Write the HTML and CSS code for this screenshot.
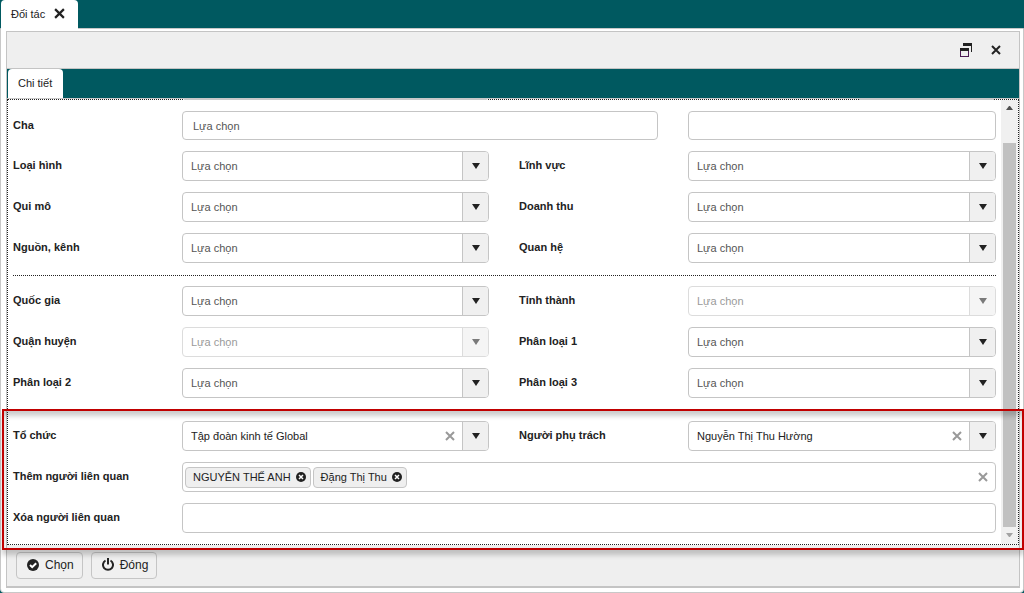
FILE: index.html
```html
<!DOCTYPE html>
<html lang="vi">
<head>
<meta charset="utf-8">
<title>Đối tác</title>
<link rel="stylesheet" href="styles.css">
</head>
<body>
<svg class="defs" aria-hidden="true">
  <symbol id="cross" viewBox="0 0 10 10"><path d="M1 1L9 9M9 1L1 9" fill="none" stroke="currentColor" stroke-width="2"/></symbol>
  <symbol id="down" viewBox="0 0 8 6"><path d="M0 0H8L4 6Z" fill="currentColor"/></symbol>
  <symbol id="remove" viewBox="0 0 10 10"><circle cx="5" cy="5" r="5" fill="currentColor"/><path d="M3 3L7 7M7 3L3 7" stroke="#fff" stroke-width="1.5"/></symbol>
</svg>
<nav class="bar">
  <div class="tab tab-main"><span>Đối tác</span><button class="icon" type="button" aria-label="Đóng tab"><svg width="11" height="11"><use href="#cross"/></svg></button></div>
</nav>
<main class="page">
  <section class="window">
    <header class="titlebar">
      <button class="icon" type="button" aria-label="Khôi phục"><svg width="12" height="14" viewBox="0 0 12 14"><path d="M3 0H12V9H11V3H3Z" fill="#222"/><path d="M0 5H9V14H0ZM1 8V13H8V8Z" fill="#222" fill-rule="evenodd"/><path d="M.5 8V13.5H8.5V8" fill="none" stroke="#4b1a55"/></svg></button>
      <button class="icon" type="button" aria-label="Đóng cửa sổ"><svg width="10" height="10"><use href="#cross"/></svg></button>
    </header>
    <nav class="bar strip"><a class="tab" href="#detail">Chi tiết</a></nav>
    <div class="content" id="detail">
      <form class="form" id="partner">
        <div class="grid edge"><i></i><i></i></div>
        <div class="grid">
          <label for="cha">Cha</label>
          <input class="box parent" id="cha" type="text" placeholder="Lựa chọn">
          <input class="box code" type="text" aria-label="Mã cha">
        </div>
        <div class="grid">
          <label for="loai">Loại hình</label>
          <div class="box combo"><select id="loai"><option>Lựa chọn</option></select><span class="arrow"><svg width="8" height="6"><use href="#down"/></svg></span></div>
          <label class="second" for="linh">Lĩnh vực</label>
          <div class="box combo"><select id="linh"><option>Lựa chọn</option></select><span class="arrow"><svg width="8" height="6"><use href="#down"/></svg></span></div>
          <label for="qui">Qui mô</label>
          <div class="box combo"><select id="qui"><option>Lựa chọn</option></select><span class="arrow"><svg width="8" height="6"><use href="#down"/></svg></span></div>
          <label class="second" for="doanh">Doanh thu</label>
          <div class="box combo"><select id="doanh"><option>Lựa chọn</option></select><span class="arrow"><svg width="8" height="6"><use href="#down"/></svg></span></div>
          <label for="nguon">Nguồn, kênh</label>
          <div class="box combo"><select id="nguon"><option>Lựa chọn</option></select><span class="arrow"><svg width="8" height="6"><use href="#down"/></svg></span></div>
          <label class="second" for="quanhe">Quan hệ</label>
          <div class="box combo"><select id="quanhe"><option>Lựa chọn</option></select><span class="arrow"><svg width="8" height="6"><use href="#down"/></svg></span></div>
        </div>
        <hr>
        <div class="grid">
          <label for="quoc">Quốc gia</label>
          <div class="box combo"><select id="quoc"><option>Lựa chọn</option></select><span class="arrow"><svg width="8" height="6"><use href="#down"/></svg></span></div>
          <label class="second" for="tinh">Tỉnh thành</label>
          <div class="box combo off"><select id="tinh" disabled><option>Lựa chọn</option></select><span class="arrow"><svg width="8" height="6"><use href="#down"/></svg></span></div>
          <label for="quan">Quận huyện</label>
          <div class="box combo off"><select id="quan" disabled><option>Lựa chọn</option></select><span class="arrow"><svg width="8" height="6"><use href="#down"/></svg></span></div>
          <label class="second" for="pl1">Phân loại 1</label>
          <div class="box combo"><select id="pl1"><option>Lựa chọn</option></select><span class="arrow"><svg width="8" height="6"><use href="#down"/></svg></span></div>
          <label for="pl2">Phân loại 2</label>
          <div class="box combo"><select id="pl2"><option>Lựa chọn</option></select><span class="arrow"><svg width="8" height="6"><use href="#down"/></svg></span></div>
          <label class="second" for="pl3">Phân loại 3</label>
          <div class="box combo"><select id="pl3"><option>Lựa chọn</option></select><span class="arrow"><svg width="8" height="6"><use href="#down"/></svg></span></div>
        </div>
        <hr>
        <div class="grid marked">
          <label for="tochuc">Tổ chức</label>
          <div class="box combo filled"><select id="tochuc"><option>Tập đoàn kinh tế Global</option></select><button class="icon clear" type="button" aria-label="Xóa tổ chức"><svg width="10" height="10"><use href="#cross"/></svg></button><span class="arrow"><svg width="8" height="6"><use href="#down"/></svg></span></div>
          <label class="second" for="phutrach">Người phụ trách</label>
          <div class="box combo filled"><select id="phutrach"><option>Nguyễn Thị Thu Hường</option></select><button class="icon clear" type="button" aria-label="Xóa người phụ trách"><svg width="10" height="10"><use href="#cross"/></svg></button><span class="arrow"><svg width="8" height="6"><use href="#down"/></svg></span></div>
          <label for="them">Thêm người liên quan</label>
          <div class="box tags">
            <span class="tag">NGUYỄN THẾ ANH<button class="icon" type="button" aria-label="Bỏ NGUYỄN THẾ ANH"><svg width="10" height="10"><use href="#remove"/></svg></button></span>
            <span class="tag">Đặng Thị Thu<button class="icon" type="button" aria-label="Bỏ Đặng Thị Thu"><svg width="10" height="10"><use href="#remove"/></svg></button></span>
            <input id="them" type="text">
            <button class="icon clear" type="button" aria-label="Xóa tất cả"><svg width="10" height="10"><use href="#cross"/></svg></button>
          </div>
          <label for="xoa">Xóa người liên quan</label>
          <input class="box wide" id="xoa" type="text">
        </div>
      </form>
      <div class="scrollbar" aria-hidden="true">
        <svg width="7" height="4" viewBox="0 0 7 4"><path d="M0 4H7L4 0H3Z" fill="#505050"/></svg>
        <div class="thumb"></div>
        <svg width="7" height="4" viewBox="0 0 7 4"><path d="M0 0H7L4 4H3Z" fill="#a3a3a3"/></svg>
      </div>
    </div>
    <footer class="actions">
      <button class="btn" type="submit" form="partner"><svg width="12" height="12" viewBox="0 0 12 12"><circle cx="6" cy="6" r="6" fill="#222"/><path d="M3 6L5.200 8.200L9.200 4.200" fill="none" stroke="#fff" stroke-width="2"/></svg>Chọn</button>
      <button class="btn" type="button"><svg width="12" height="13" viewBox="0 0 12 13"><path d="M3.500 2.500A5 5 0 1 0 8.500 2.500M6 0V6.500" fill="none" stroke="#222" stroke-width="2"/></svg>Đóng</button>
    </footer>
  </section>
</main>
</body>
</html>
```
FILE: styles.css
```css
* { box-sizing: border-box; }

body {
  margin: 0;
  min-height: 100vh;
  display: flex;
  flex-direction: column;
  background: #005960;
  color: #222;
  font: 11px/16px "Liberation Sans", Arial, sans-serif;
}

.defs { display: none; }
svg { display: block; flex: none; }

button, input, select { font: inherit; color: inherit; margin: 0; }

.icon {
  display: flex;
  align-items: center;
  justify-content: center;
  padding: 0;
  border: 0;
  background: none;
}

.bar {
  display: flex;
  background: #005960;
  height: 28px;
  padding-left: 1px;
}

.tab {
  display: flex;
  align-items: center;
  gap: 9px;
  padding: 0 11px 2px 10px;
  border-radius: 4px 4px 0 0;
  background: #fff;
  color: #222;
  text-decoration: none;
}

.tab-main {
  z-index: 1;
  margin-bottom: -1px;
  padding: 0 13px 2px 10px;
}

.page {
  flex: 1;
  display: flex;
  flex-direction: column;
  padding: 2px 3px 4px 5px;
  border: 1px solid #c8c8c8;
  border-radius: 0 0 4px 4px;
  background: #fff;
}

.window {
  flex: 1;
  display: flex;
  flex-direction: column;
  border: 1px solid #c4c4c4;
  border-bottom-width: 2px;
}

.titlebar {
  display: flex;
  align-items: center;
  justify-content: flex-end;
  gap: 19px;
  height: 37px;
  padding-right: 18px;
  border-bottom: 1px solid #c4c4c4;
  background: #efefef;
}

.strip {
  height: 30px;
  border-bottom: 1px solid #c8c8c8;
}

.content {
  flex: 1;
  display: flex;
  border: 1px dotted #222;
}

.form {
  flex: 1;
  display: flex;
  flex-direction: column;
  gap: 11px;
  padding: 0 5px 11px;
}

.grid {
  display: grid;
  grid-template-columns: 169px 307fr 30px 139px 30px 308fr;
  row-gap: 11px;
}

/* bottom edge of the row scrolled out above */
.edge { margin-top: -1px; height: 1px; }
.edge i { grid-column: 2; margin: 0 2px; background: #c8c8c8; }
.edge i + i { grid-column: 6; margin: 0 2px 0 171px; }

label {
  grid-column: 1;
  align-self: center;
  padding-bottom: 2px;
  font-weight: bold;
}

label.second { grid-column: 4 / 6; }

.box {
  min-width: 0;
  height: 30px;
  border: 1px solid #c5c5c5;
  border-radius: 4px;
  background: #fff;
}

.parent, .code { height: 29px; padding: 0 10px; }
.parent { grid-column: 2 / 5; }
.code { grid-column: 6; }
.wide, .tags { grid-column: 2 / 7; }
.wide { padding: 0 8px; }

::placeholder { color: #555; opacity: 1; }

.combo { display: flex; overflow: hidden; }
.second + .combo { grid-column: 6; }

.combo select {
  flex: 1;
  min-width: 0;
  padding: 0 8px;
  border: 0;
  appearance: none;
  background: none;
  color: #555;
  opacity: 1;
}

.combo.filled select { color: #222; }
.off { opacity: .6; }

.arrow {
  display: flex;
  align-items: center;
  justify-content: center;
  width: 26px;
  border-left: 1px solid #c5c5c5;
  background: #f0f0f0;
}

.clear { width: 24px; color: #999; }

.tags {
  display: flex;
  align-items: center;
  gap: 2px;
  padding-left: 2px;
}

.tags input {
  flex: 1;
  min-width: 0;
  border: 0;
  outline: 0;
  background: none;
}

.tag {
  display: flex;
  align-items: center;
  gap: 5px;
  height: 21px;
  padding: 0 4px 0 7px;
  border: 1px solid #c5c5c5;
  border-radius: 4px;
  background: #efefef;
  white-space: nowrap;
}

hr {
  width: 100%;
  margin: 1px 0 -1px;
  border: 0;
  border-top: 1px dotted #222;
}

.marked { position: relative; }

/* highlight frame round the last group */
.marked::after {
  content: "";
  position: absolute;
  z-index: 2;
  inset: -12px -28px -17px -11px;
  border: 2px solid #c00000;
  box-shadow: 0 5px 5px rgba(0, 0, 0, .2), inset 0 5px 5px rgba(0, 0, 0, .2);
  pointer-events: none;
}

.scrollbar {
  display: flex;
  flex-direction: column;
  align-items: center;
  width: 17px;
  padding: 6px 0 7px;
  background: #f0f0f0;
}

.thumb {
  flex: 1;
  width: 13px;
  margin: 33px 0 6px;
  background: #c1c1c1;
}

.actions {
  display: flex;
  gap: 8px;
  padding: 7px 9px;
  background: #efefef;
}

.btn {
  display: flex;
  align-items: center;
  gap: 6px;
  height: 27px;
  padding: 0 8px 2px 10px;
  border: 1px solid #c5c5c5;
  border-radius: 4px;
  background: #f0f0f0;
  font-size: 12px;
}
```
